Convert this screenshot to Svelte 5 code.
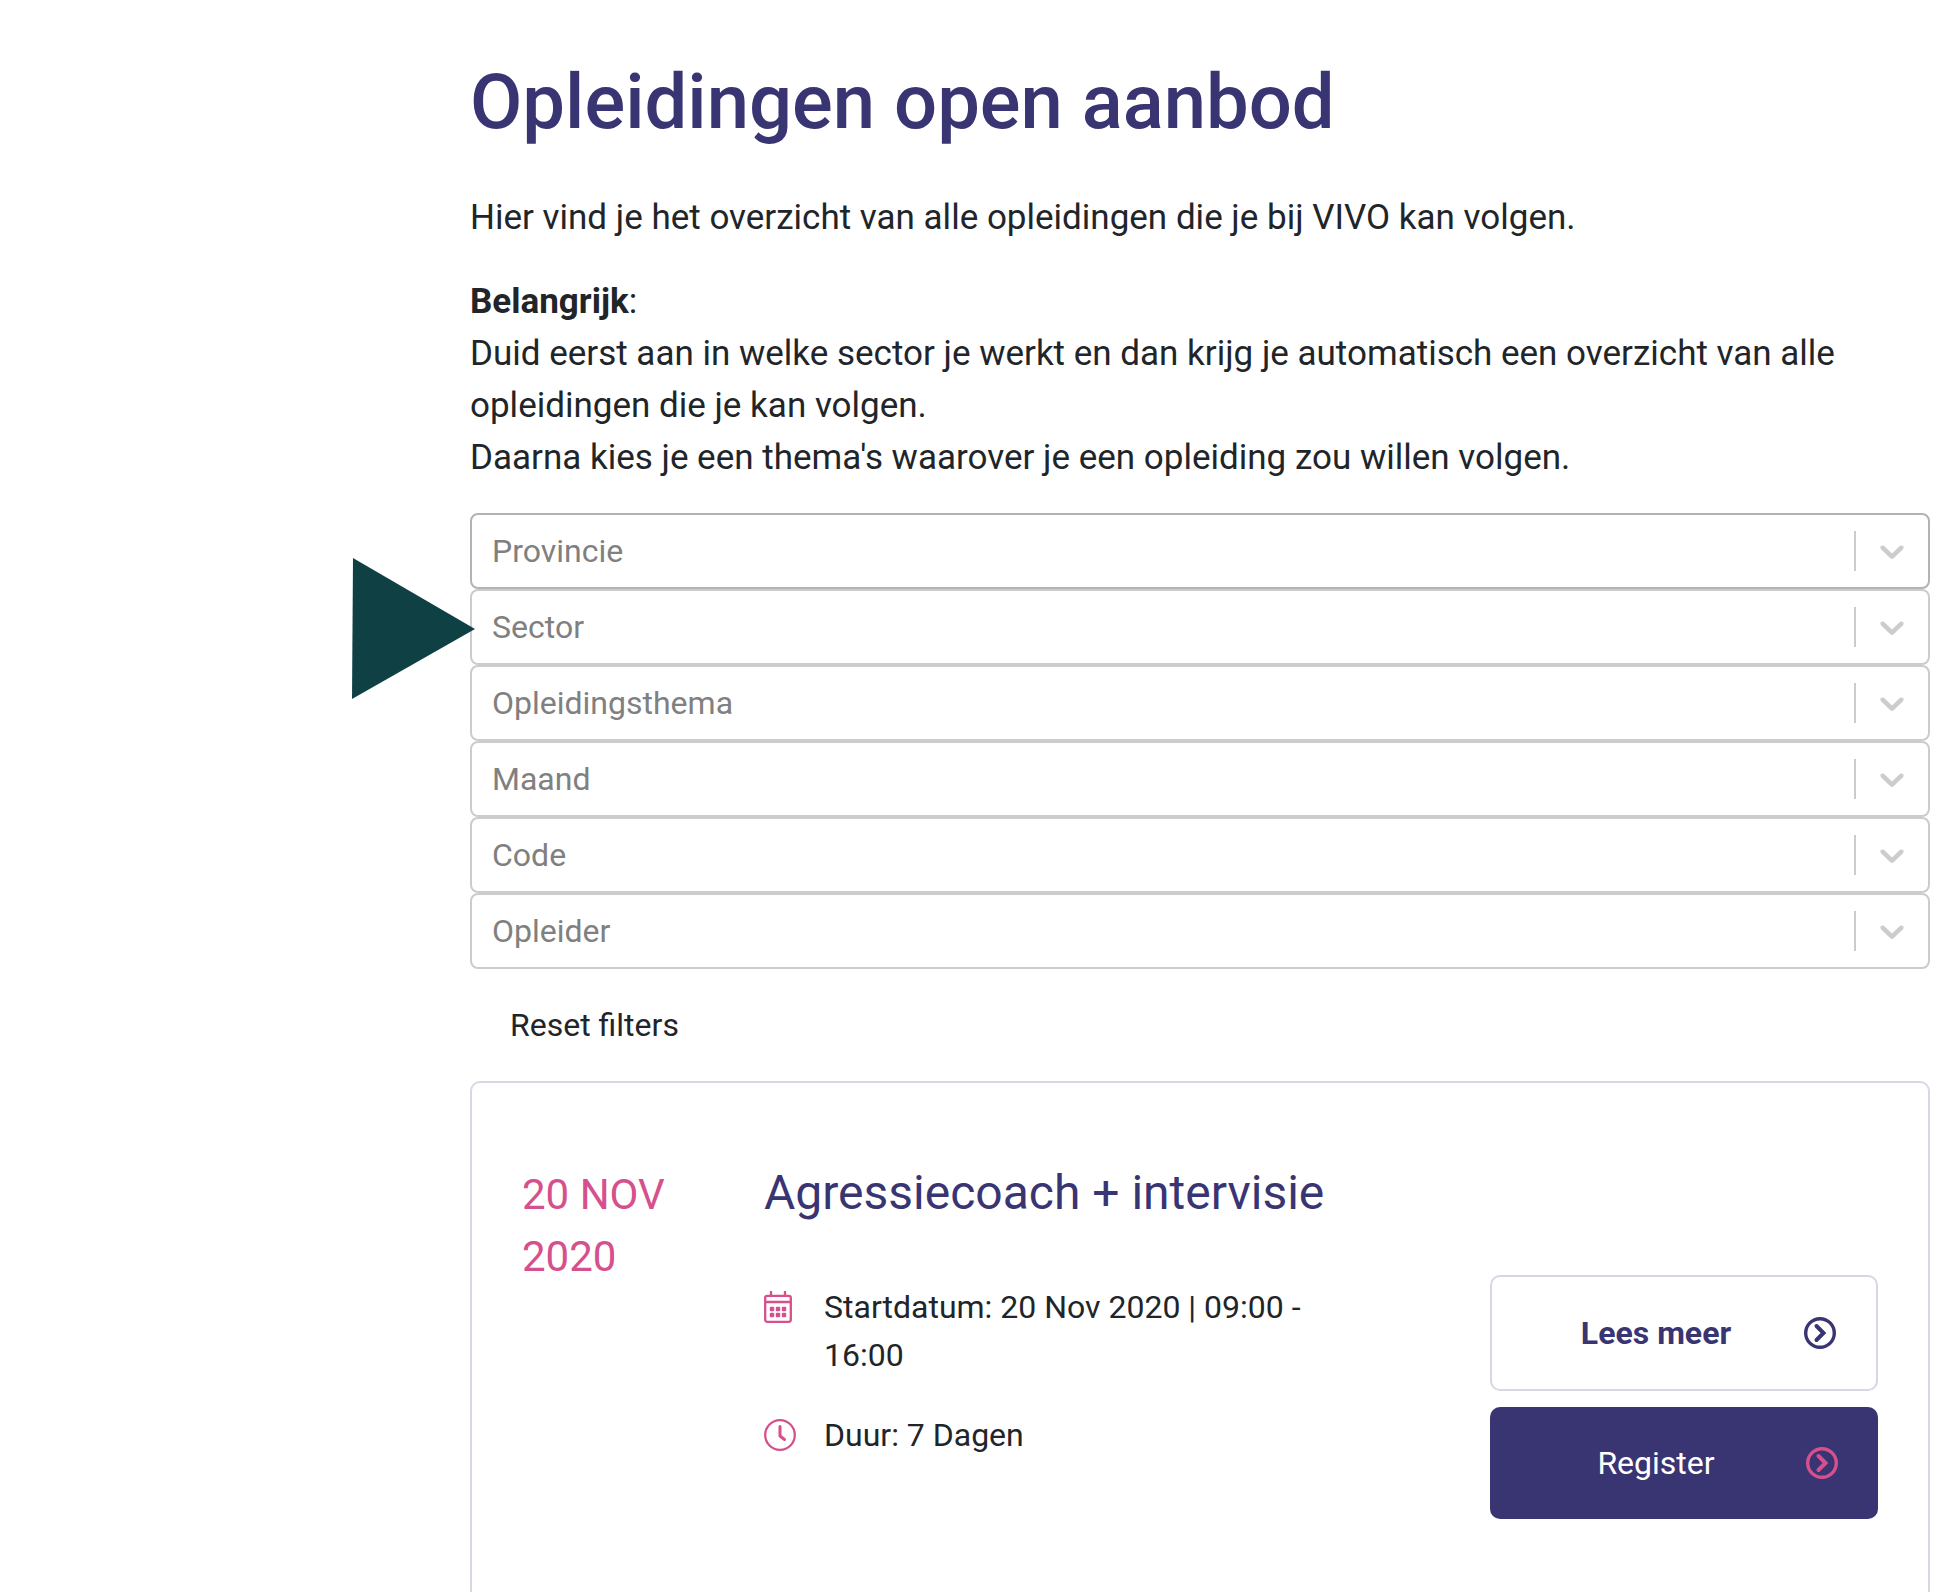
<script lang="ts">
  interface Filter {
    id: string;
    label: string;
  }

  const filters: Filter[] = [
    { id: 'provincie', label: 'Provincie' },
    { id: 'sector', label: 'Sector' },
    { id: 'thema', label: 'Opleidingsthema' },
    { id: 'maand', label: 'Maand' },
    { id: 'code', label: 'Code' },
    { id: 'opleider', label: 'Opleider' },
  ];

  let values: Record<string, string> = $state({
    provincie: '', sector: '', thema: '', maand: '', code: '', opleider: '',
  });

  function reset() {
    for (const f of filters) values[f.id] = '';
  }

  const dots = [8, 14, 20].flatMap((x) => [18, 24].map((y) => ({ x, y })));
</script>

{#snippet arrowIcon()}
  <svg class="arrow" viewBox="0 0 32 32" aria-hidden="true">
    <circle cx="16" cy="16" r="14.3" />
    <path d="M12.5 9 L19.5 16 L12.5 23" />
  </svg>
{/snippet}

<main class="page">
  <h1>Opleidingen open aanbod</h1>

  <div class="intro">
    <p>Hier vind je het overzicht van alle opleidingen die je bij VIVO kan volgen.</p>
    <p>
      <strong>Belangrijk</strong>:<br />
      Duid eerst aan in welke sector je werkt en dan krijg je automatisch een overzicht van alle opleidingen die je kan volgen.<br />
      Daarna kies je een thema's waarover je een opleiding zou willen volgen.
    </p>
  </div>

  <form class="filters">
    {#each filters as filter, i (filter.id)}
      <div class="filter" class:active={i === 0}>
        <select id={filter.id} aria-label={filter.label} bind:value={values[filter.id]}>
          <option value="">{filter.label}</option>
        </select>
        <span class="indicator">
          <svg viewBox="0 0 20 20" aria-hidden="true">
            <path d="M4.516 7.548c0.436-0.446 1.043-0.481 1.576 0l3.908 3.747 3.908-3.747c0.533-0.481 1.141-0.446 1.574 0 0.436 0.445 0.408 1.197 0 1.615-0.406 0.418-4.695 4.502-4.695 4.502-0.217 0.223-0.502 0.335-0.787 0.335s-0.57-0.112-0.789-0.335c0 0-4.287-4.084-4.695-4.502s-0.436-1.17 0-1.615z" />
          </svg>
        </span>
        {#if filter.id === 'sector'}
          <svg class="pointer" viewBox="0 0 123 141" aria-hidden="true">
            <path d="M1 0 L123 71 L0 141 Z" />
          </svg>
        {/if}
      </div>
    {/each}
    <button type="button" class="reset" onclick={reset}>Reset filters</button>
  </form>

  <article class="card">
    <div class="date">20 NOV 2020</div>
    <h2>Agressiecoach + intervisie</h2>
    <ul class="info">
      <li>
        <svg class="icon" viewBox="0 0 32 32" aria-hidden="true">
          <rect x="1.2" y="4.8" width="25.6" height="26" rx="2" />
          <path d="M1 11H27M7 0V5M21 0V5" />
          {#each dots as dot}
            <rect class="dot" x={dot.x - 2.2} y={dot.y - 2.2} width="4.4" height="4.4" rx="1" />
          {/each}
        </svg>
        <span>Startdatum: 20 Nov 2020 | 09:00 - 16:00</span>
      </li>
      <li>
        <svg class="icon" viewBox="0 0 32 32" aria-hidden="true">
          <circle cx="16" cy="16" r="14.8" />
          <path class="hands" d="M16 7.5V17L20.5 20.5" />
        </svg>
        <span>Duur: 7 Dagen</span>
      </li>
    </ul>
    <div class="actions">
      <a class="btn outline" href="#lees-meer"><span>Lees meer</span>{@render arrowIcon()}</a>
      <a class="btn solid" href="#register"><span>Register</span>{@render arrowIcon()}</a>
    </div>
  </article>
</main>

<style>
  :global(body) {
    margin: 0;
    background: #fff;
  }
  .page {
    --navy: #393572;
    --pink: #d5508c;
    --line: #d8d7e5;
    box-sizing: border-box;
    padding: 46px 27px 0 470px;
    font-family: Roboto, 'Liberation Sans', sans-serif;
    font-size: 32px;
    line-height: 48px;
    color: #212529;
  }
  h1 {
    margin: 0 0 34px;
    font-size: 76px;
    font-weight: 500;
    line-height: 112px;
    color: var(--navy);
  }
  .intro {
    font-size: 35px;
    line-height: 52px;
  }
  .intro p {
    margin: 0 0 32px;
  }
  .intro p:last-child {
    margin-bottom: 29px;
  }
  .filter {
    position: relative;
    display: flex;
    align-items: center;
    border: 2px solid #ccc;
    border-radius: 8px;
  }
  .filter.active {
    border-color: #b3b3b3;
  }
  select {
    flex: 1;
    min-width: 0;
    height: 72px;
    padding: 0 20px;
    border: none;
    background: transparent;
    appearance: none;
    font: inherit;
    color: #808080;
  }
  .indicator {
    display: flex;
    padding: 0 16px;
    border-left: 2px solid #ccc;
  }
  .indicator svg {
    width: 40px;
    height: 40px;
    fill: #ccc;
  }
  /* sits over the left edge of the row it points at */
  .pointer {
    position: absolute;
    top: -33px;
    right: calc(100% - 3px);
    width: 123px;
    height: 141px;
    fill: #0f4044;
  }
  .reset {
    display: block;
    margin: 20px 0;
    padding: 12px 40px;
    border: none;
    background: transparent;
    font: inherit;
    color: inherit;
    cursor: pointer;
  }
  .card {
    display: grid;
    grid-template-columns: 210px 1fr 388px;
    column-gap: 32px;
    padding: 81px 50px;
    border: 2px solid var(--line);
    border-radius: 10px;
  }
  .date {
    grid-row: span 2;
    font-size: 42px;
    line-height: 62px;
    color: var(--pink);
  }
  h2 {
    grid-column: 2 / 4;
    margin: 0 0 53px;
    font-size: 48px;
    font-weight: 400;
    line-height: 58px;
    color: var(--navy);
  }
  .info {
    display: flex;
    flex-direction: column;
    gap: 32px;
    margin: 0;
    padding: 8px 80px 0 0;
    list-style: none;
  }
  .info li {
    display: flex;
    gap: 28px;
  }
  .icon {
    flex-shrink: 0;
    width: 32px;
    height: 32px;
    margin-top: 8px;
    fill: none;
    stroke: var(--pink);
    stroke-width: 2.3;
  }
  .icon .dot {
    fill: var(--pink);
    stroke: none;
  }
  .icon .hands {
    stroke-width: 3;
    stroke-linecap: round;
    stroke-linejoin: round;
  }
  .actions {
    display: flex;
    flex-direction: column;
    gap: 16px;
  }
  .btn {
    display: flex;
    align-items: center;
    padding: 32px 40px 32px 16px;
    border-radius: 10px;
    text-decoration: none;
  }
  .btn span {
    flex: 1;
    text-align: center;
  }
  .outline {
    border: 2px solid var(--line);
    font-weight: 700;
    color: var(--navy);
  }
  .solid {
    background: var(--navy);
    color: #fff;
  }
  .arrow {
    width: 32px;
    height: 32px;
    fill: none;
    stroke: currentColor;
    stroke-width: 3.4;
  }
  .arrow path {
    stroke-width: 4;
    stroke-linecap: round;
  }
  .solid .arrow {
    color: var(--pink);
  }
</style>
